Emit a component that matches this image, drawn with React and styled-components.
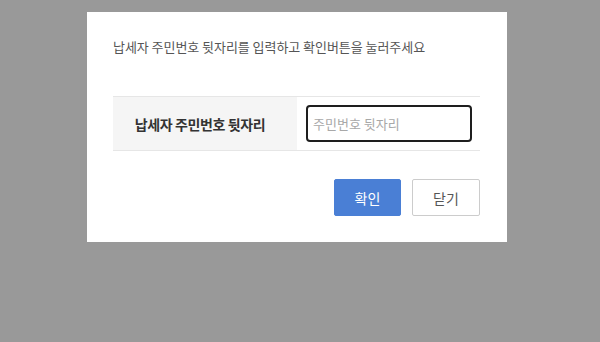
import React from 'react';
import styled, { createGlobalStyle } from 'styled-components';

const GlobalStyle = createGlobalStyle`
  html, body {
    margin: 0;
    padding: 0;
    background: #999999;
    height: 100%;
  }
  body {
    font-family: "Noto Sans CJK KR", "Noto Sans", sans-serif;
  }
`;

const Page = styled.div`
  width: 600px;
  height: 342px;
  padding-top: 12px;
  box-sizing: border-box;
`;

const Modal = styled.div`
  width: 420px;
  margin-left: 87px;
  background: #ffffff;
  padding: 26px 27px 26px 26px;
  box-sizing: border-box;
`;

const Message = styled.p`
  margin: 0;
  font-size: 13px;
  line-height: 18px;
  letter-spacing: -0.05px;
  color: #555555;
`;

const FormTable = styled.div`
  margin-top: 40px;
  display: flex;
  border-top: 1px solid #e6e6e6;
  border-bottom: 1px solid #e6e6e6;
`;

const Label = styled.div`
  width: 184px;
  flex: none;
  background: #f5f5f5;
  display: flex;
  align-items: center;
  justify-content: center;
  padding-right: 10px;
  box-sizing: border-box;
  font-size: 14px;
  font-weight: 700;
  letter-spacing: -0.4px;
  color: #333333;
`;

const Field = styled.div`
  flex: 1;
  padding: 8px 8px 8px 9px;
`;

const Input = styled.input`
  display: block;
  width: 100%;
  height: 37px;
  box-sizing: border-box;
  border: 2px solid #1e1e1e;
  border-radius: 4px;
  padding: 0 5px;
  font-family: inherit;
  font-size: 13px;
  color: #333333;
  caret-color: #777777;
  outline: none;

  &::placeholder {
    color: #a8a8a8;
  }
`;

const Actions = styled.div`
  margin-top: 28px;
  display: flex;
  justify-content: flex-end;
  gap: 11px;
`;

const Button = styled.button`
  height: 37px;
  width: ${(p) => p.$width}px;
  box-sizing: border-box;
  border-radius: 2px;
  font-family: inherit;
  font-size: 14px;
  cursor: pointer;
  border: 1px solid ${(p) => (p.$primary ? '#4a7fd5' : '#cccccc')};
  background: ${(p) => (p.$primary ? '#4a7fd5' : '#ffffff')};
  color: ${(p) => (p.$primary ? '#ffffff' : '#555555')};
`;

export default function App() {
  return (
    <Page>
      <GlobalStyle />
      <Modal>
        <Message>납세자 주민번호 뒷자리를 입력하고 확인버튼을 눌러주세요</Message>
        <FormTable>
          <Label>납세자 주민번호 뒷자리</Label>
          <Field>
            <Input type="password" placeholder="주민번호 뒷자리" autoFocus />
          </Field>
        </FormTable>
        <Actions>
          <Button $primary $width={67}>확인</Button>
          <Button $width={68}>닫기</Button>
        </Actions>
      </Modal>
    </Page>
  );
}
